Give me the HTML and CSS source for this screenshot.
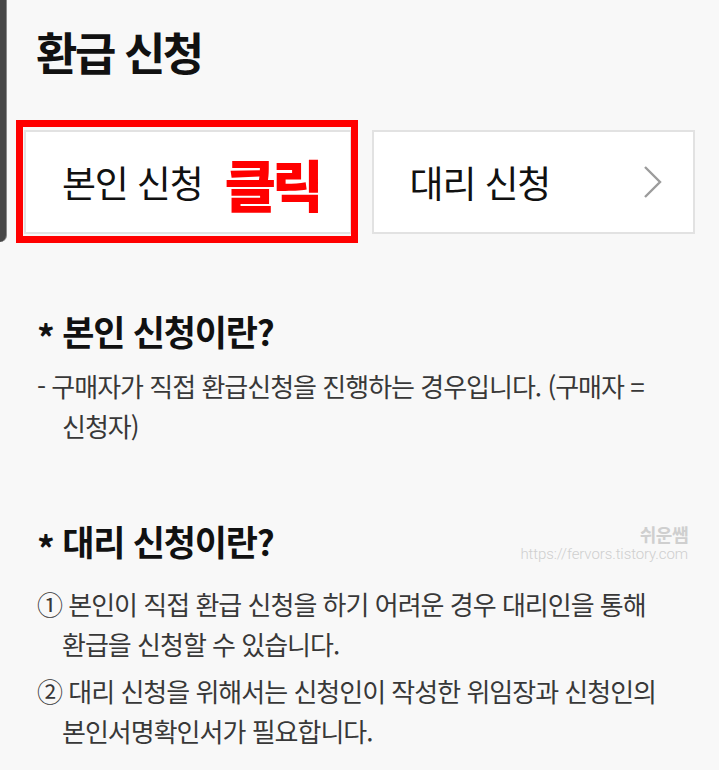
FILE: index.html
```html
<!DOCTYPE html>
<html lang="ko">
<head>
    <meta charset="UTF-8">
    <meta name="viewport" content="width=device-width, initial-scale=1.0">
    <title>환급 신청</title>
    <link rel="stylesheet" href="styles.css">
</head>
<body>
    <div class="phone-edge"></div>
    <div class="page">
        <h1 class="title">환급 신청</h1>

        <div class="choices">
            <a class="choice choice-self" href="#">
                <span>본인 신청</span>
                <span class="click-mark">클릭</span>
            </a>
            <a class="choice" href="#">
                <span>대리 신청</span>
                <svg class="chevron" width="20" height="34" viewBox="0 0 20 34">
                    <path d="M2 2 L17 17 L2 32" fill="none" stroke="#9c9c9c" stroke-width="2.4"/>
                </svg>
            </a>
        </div>

        <section class="info">
            <h2><span class="star">*</span> 본인 신청이란?</h2>
            <p class="hang">- 구매자가 직접 환급신청을 진행하는 경우입니다. (구매자 = 신청자)</p>
        </section>

        <section class="info info-proxy">
            <h2><span class="star">*</span> 대리 신청이란?</h2>
            <div class="watermark">
                <b>쉬운쌤</b>
                <span>https://fervors.tistory.com</span>
            </div>
            <ul class="steps">
                <li class="hang">① 본인이 직접 환급 신청을 하기 어려운 경우 대리인을 통해 환급을 신청할 수 있습니다.</li>
                <li class="hang">② 대리 신청을 위해서는 신청인이 작성한 위임장과 신청인의 본인서명확인서가 필요합니다.</li>
            </ul>
        </section>
    </div>
</body>
</html>
```

FILE: styles.css
```css
body, html {
    margin: 0;
    padding: 0;
    background-color: #f8f8f8;
    font-family: 'Noto Sans CJK KR', 'Noto Sans', sans-serif;
    color: #111;
}
.phone-edge {
    position: absolute;
    left: 0;
    top: 0;
    width: 6px;
    height: 242px;
    background-color: #474747;
    border-right: 1px solid #8a8a8a;
    border-bottom-right-radius: 8px;
}
.page {
    padding: 0 24px;
    word-break: keep-all;
}
.title {
    margin: 0;
    padding: 24px 0 0 12px;
    font-size: 45px;
    line-height: 56px;
    font-weight: 700;
    letter-spacing: -2.5px;
}
.choices {
    display: flex;
    gap: 20px;
    margin-top: 50px;
}
.choice {
    flex: 1;
    height: 104px;
    box-sizing: border-box;
    display: flex;
    align-items: center;
    padding: 0 30px 0 36px;
    background-color: #fff;
    border: 2px solid #e2e2e2;
    color: #111;
    text-decoration: none;
    font-size: 37px;
    letter-spacing: -1.2px;
    white-space: nowrap;
    justify-content: space-between;
}
.choice span {
    flex-shrink: 0;
}
.choice-self {
    position: relative;
    justify-content: flex-start;
}
/* 빨간 강조 테두리 */
.choice-self::after {
    content: "";
    position: absolute;
    left: -10px;
    top: -12px;
    right: -8px;
    bottom: -11px;
    border: 7px solid #ff0000;
}
.click-mark {
    margin-left: 22px;
    color: #ff0000;
    font-size: 56px;
    font-weight: 900;
    letter-spacing: -4px;
}
.chevron {
    display: block;
}
.info {
    padding-left: 13px;
}
.info h2 {
    margin: 75px 0 0 0;
    font-size: 35px;
    line-height: 44px;
    font-weight: 700;
    letter-spacing: -1.2px;
}
.star {
    display: inline-block;
    vertical-align: -0.15em;
}
.hang {
    padding-left: 25px;
    text-indent: -25px;
    font-size: 26px;
    line-height: 40px;
    letter-spacing: -1px;
    color: #383838;
}
.info p {
    margin: 8px 0 0 0;
}
.info-proxy {
    position: relative;
}
.info-proxy h2 {
    margin-top: 73px;
}
.steps {
    list-style: none;
    margin: 15px 0 0 0;
    padding: 0;
}
.steps li {
    padding-left: 25px;
    margin-bottom: 7px;
}
.watermark {
    position: absolute;
    right: 7px;
    top: 5px;
    display: flex;
    flex-direction: column;
    align-items: flex-end;
    gap: 1px;
    color: #cfcfcf;
}
.watermark b {
    font-size: 18px;
    line-height: 20px;
    letter-spacing: -0.5px;
}
.watermark span {
    font-family: Roboto, 'Liberation Sans', sans-serif;
    font-weight: 300;
    font-size: 15px;
    line-height: 18px;
    letter-spacing: -0.1px;
}
```
